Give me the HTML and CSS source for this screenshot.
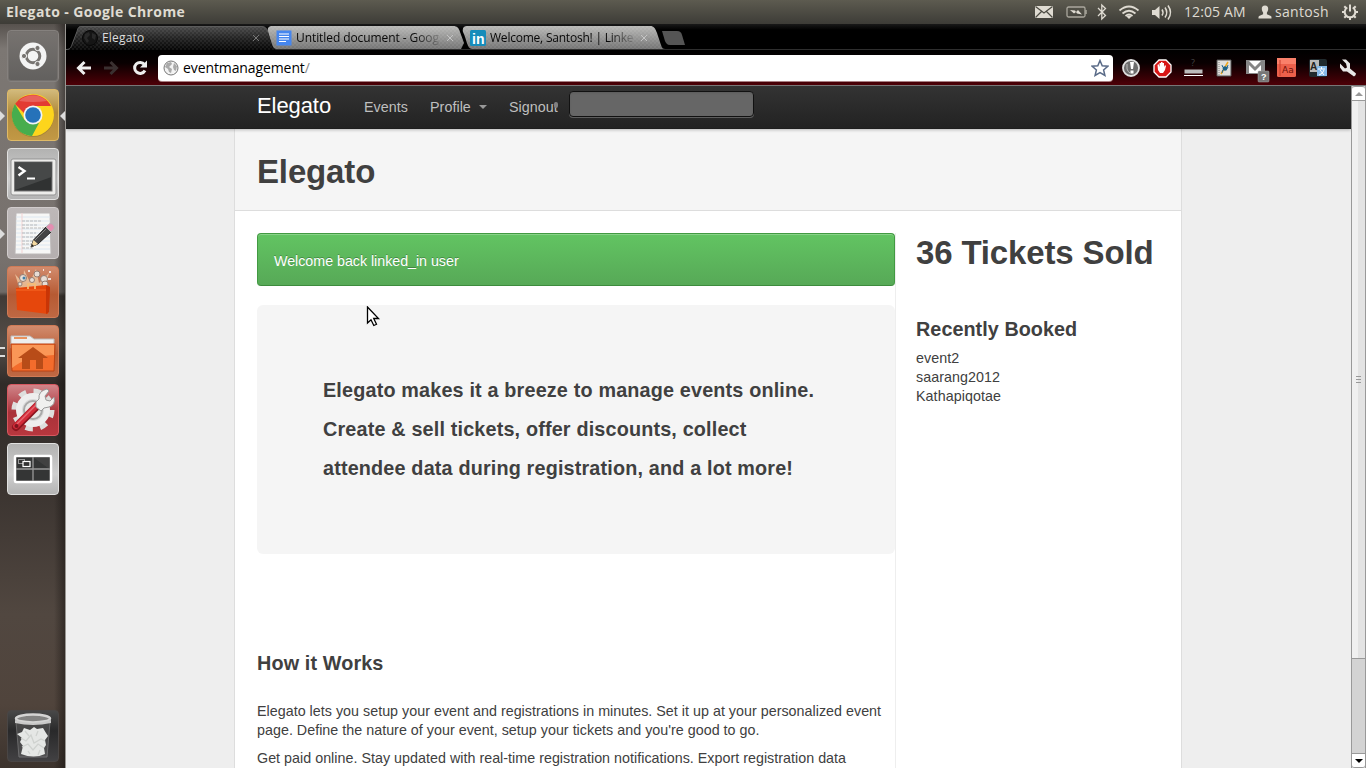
FILE: index.html
```html
<!DOCTYPE html>
<html lang="en">
<head>
<meta charset="utf-8">
<title>Elegato</title>
<link rel="stylesheet" href="styles.css">
</head>
<body>
<header class="panel">
  <span class="panel-title">Elegato - Google Chrome</span>
  <svg class="indicators" width="166" height="24" viewBox="1030 0 166 24" fill="none" stroke="#dfdbd2">
    <path d="M1035 6h18v12h-18z" fill="#dfdbd2" stroke="none"/><path d="M1035.500 6.500l8.500 6.500 8.500-6.500M1035.500 17.500l6-6M1052.500 17.500l-6-6" stroke="#4b4a42" stroke-width="1.200"/>
    <rect x="1067" y="7" width="18" height="10" rx="1.500" stroke="#aaa79d" stroke-width="1.300"/><path d="M1086 10v4" stroke="#aaa79d" stroke-width="1.500"/><path d="M1070 10l5 .5 1 1.500 2-2 4 4.500-5-1-1-1.500-2 1.500z" fill="#dfdbd2" stroke="none"/>
    <path d="M1098 8l7.500 7.500-3.700 3.500V5l3.700 3.500L1098 16" stroke-width="1.300"/>
    <path d="M1119.500 10.500q9.500-8 19 0M1122.500 13.500q6.500-5.500 13 0M1125.500 16q3.500-3 7 0" stroke-width="1.700"/><path d="M1126.500 16.500l2.500 2.500 2.500-2.500q-2.500-2-5 0z" fill="#dfdbd2" stroke="none"/>
    <path d="M1152 10h3l4.500-4v13l-4.500-4h-3z" fill="#dfdbd2" stroke="none"/><path d="M1162 9.500q2 3 0 6M1165 7.500q3.500 5 0 10M1168 5.500q5 7 0 14" stroke-width="1.500"/>
  </svg>
  <span class="clock">12:05 AM</span>
  <svg class="person" width="14" height="14" viewBox="0 0 14 14"><path d="M7 .5c2.300 0 3.300 1.500 3.200 3.500-.1 2-.9 2.800-1.300 3.500v1.800l4 1.700c.7.400.6 1.500.6 2.500H.5c0-1-.1-2.100.6-2.500l4-1.700V7.500C4.700 6.800 3.900 6 3.800 4 3.700 2 4.700.5 7 .5z" fill="#dfdbd2"/></svg>
  <span class="user">santosh</span>
  <svg class="gear" width="18" height="18" viewBox="0 0 18 18" fill="none" stroke="#dfdbd2"><path d="M6.300 4.500a5.300 5.300 0 1 0 5.400 0" stroke-width="2"/><path d="M9 1.500v7" stroke-width="2"/><path d="M1 9h3M14 9h3M3.300 14.700l2-2M14.700 14.700l-2-2M3.300 3.300l2 2M14.700 3.300l-2 2M9 14v3" stroke-width="2"/></svg>
</header>
<div class="desktop">
  <nav class="launcher">
    <div class="tile dash"><svg width="52" height="52" viewBox="0 0 52 52"><circle cx="26" cy="26" r="13.500" fill="#f4f4f4"/><circle cx="26" cy="26" r="6.800" fill="none" stroke="#777471" stroke-width="3"/><g fill="#777471" stroke="#f4f4f4"><circle cx="17" cy="26" r="2.600"/><circle cx="30.500" cy="18" r="2.600"/><circle cx="30.500" cy="34" r="2.600"/></g></svg></div>
    <div class="tile chrome running"><svg width="52" height="52" viewBox="0 0 52 52"><circle cx="26" cy="27" r="21" fill="#8b7033" opacity=".5"/><circle cx="26" cy="26" r="21" fill="#fdd51c"/><path d="M8 15A21 21 0 0 1 44 17H26l-9 7z" fill="#e33b32"/><path d="M8 15l9.500 16 8.500 4 6-1-7 13A21 21 0 0 1 8 15z" fill="#47ad4d"/><circle cx="26" cy="26" r="9.500" fill="#f1f5f8"/><circle cx="26" cy="26" r="7.800" fill="#2672b9"/><path d="M12 12a20 20 0 0 1 28 0q-14 2-28 0" fill="#fff" opacity=".2"/></svg></div>
    <div class="tile silver"><svg width="52" height="52" viewBox="0 0 52 52"><rect x="4" y="11" width="45" height="36" rx="2" fill="#ececea" stroke="#939393"/><rect x="7.500" y="14" width="37.500" height="29" fill="#303232" stroke="#777"/><path d="M8 14.500h36.500V29L8 42z" fill="#464848"/><path d="M11.500 19l6 4-6 4.500" fill="none" stroke="#fff" stroke-width="2.400"/><path d="M20 30.500h8" stroke="#fff" stroke-width="2"/></svg></div>
    <div class="tile paper running-left"><svg width="52" height="52" viewBox="0 0 52 52"><path d="M9 6h34l1 41H8z" fill="#f7f7f6" stroke="#bcb8b8"/><path d="M9 10h34M9 14h34M9 18h34M9 22h34M9 26h34M9 30h34M9 34h34M9 38h34M9 42h34" stroke="#dce7f1"/><path d="M15 6v40" stroke="#f3d3d3"/><path d="M15 14h20M15 18h15M15 21h23M15 26h14M15 30h18M15 34h13M15 37h16M15 41h12" stroke="#bbb" stroke-dasharray="3 1"/><path d="M24 40l2.500-7L40 19l5 5-14 13z" fill="#454545" stroke="#222"/><path d="M24 40l2.500-7 4.500 4z" fill="#f4d9a1"/><path d="M39 20l4-3.500q4 0 4.500 4.500L44 25z" fill="#e48eb1" stroke="#b8b1b5"/><path d="M28 33l11-11" stroke="#888"/><path d="M24 40l1-3 2 2z" fill="#222"/></svg></div>
    <div class="tile orange"><svg width="52" height="52" viewBox="0 0 52 52"><path d="M13 24L8 8l8 9 1-13 6 12 6-13 3 14 10-10-3 12z" fill="#ffe7bf" opacity=".6"/><g fill="#e7ddd5" stroke="#947d73"><circle cx="16" cy="12" r="3.500"/><circle cx="30" cy="8" r="3"/><circle cx="37" cy="13" r="3.500"/><circle cx="25" cy="14" r="2.500"/><circle cx="13" cy="18" r="2"/><circle cx="38" cy="18" r="3"/></g><circle cx="17" cy="12" r="1.500" fill="#407fa8"/><path d="M42 6h2M21 5h2M41 13h3M36 4h1" stroke="#fff" stroke-width="1.500"/><path d="M9 22l30-3 4 3-2 26-31-4z" fill="#e6470c"/><path d="M39 19l4 2-1 25-3 2z" fill="#c93506"/><path d="M9 24h30" stroke="#f76a26"/><path d="M21 23v-5h7v5" fill="none" stroke="#f8bd73" stroke-width="1.700"/></svg></div>
    <div class="tile orange home running-left"><svg width="52" height="52" viewBox="0 0 52 52"><path d="M4 21V11h19l4 3h20v9H4z" fill="#eee" stroke="#bbb"/><path d="M7 13h13" stroke="#e9925e" stroke-width="2"/><path d="M4 19h44l-1 27H5z" fill="#f36c2c" stroke="#ba4213"/><path d="M5 20h42v10Q20 31 5 43z" fill="#ffb475" opacity=".6"/><path d="M11 33l15-11 15 11h-5v11h-7v-9h-6v9h-8V33z" fill="#b84c18"/></svg></div>
    <div class="tile red"><svg width="52" height="52" viewBox="0 0 52 52"><circle cx="26" cy="26" r="18" fill="none" stroke="#dededd" stroke-width="7" stroke-dasharray="7.050 7.080"/><circle cx="26" cy="26" r="14" fill="#dadada" stroke="#eee" stroke-width="6"/><circle cx="26" cy="26" r="9" fill="#e9e9e8" stroke="#a9a9a9" stroke-width="2"/><path d="M9 43l22-22" stroke="#8c1620" stroke-width="8" stroke-linecap="round"/><path d="M9 42l22-22" stroke="#d32c3a" stroke-width="6" stroke-linecap="round"/><path d="M10 40l21-21" stroke="#e66870" stroke-width="1.500"/><circle cx="9.500" cy="42" r="2" fill="#7e151e"/><path d="M29 18l3-3q-1-8 8-10l2 2-4 5 1 4 4 1 4-4q2 8-5 10l-5 1-3 3-5-4z" fill="#f0f0ef" stroke="#999"/></svg></div>
    <div class="tile silver"><svg width="52" height="52" viewBox="0 0 52 52"><rect x="8" y="13" width="36" height="26" rx="1" fill="#343535" stroke="#fff" stroke-width="2.500"/><path d="M26 14v24M9 26h34" stroke="#999" stroke-width="1.300"/><path d="M26.500 14.500h16V26" fill="#555" opacity=".4"/><rect x="11.500" y="16.500" width="6" height="4" fill="#333" stroke="#999"/><rect x="16" y="18.500" width="7" height="5" fill="#333" stroke="#fff" stroke-width="1.200"/></svg></div>
    <div class="tile trash"><svg width="52" height="52" viewBox="0 0 52 52"><path d="M9 12h34l-3 35H12z" fill="#666" opacity=".45" stroke="#aaa"/><path d="M10 24l5-2 2-4 6 2 4-3 3 2 6-1 3 5 2 3-3 4 1 5-2 3 1 6q-11 5-24 0l2-8-3-4 2-4z" fill="#e5e7e5"/><path d="M14 28l5 3 5-6 3 8 7-4 4 2M15 37l6-3 5 6 5-6 6 4M18 21l4 5M31 21l-2 5M21 41l2 3M33 40l-2 5" stroke="#cfd2cf" stroke-width="1.300" fill="none"/><ellipse cx="26" cy="8.500" rx="17" ry="4" fill="#838382" stroke="#d4d4d3" stroke-width="2.500"/><path d="M8 10q18 6 36 0v3q-18 4-36 0z" fill="#c9c9c8"/></svg></div>
  </nav>
  <main class="browser">
    <div class="tabstrip">
      <svg class="tab-shapes" width="640" height="26" viewBox="66 24 640 26">
        <defs>
          <linearGradient id="dark" x1="0" y1="0" x2="0" y2="1"><stop offset="0" stop-color="#4b4b4b"/><stop offset=".5" stop-color="#232323"/><stop offset="1" stop-color="#050505"/></linearGradient>
          <linearGradient id="light" x1="0" y1="0" x2="0" y2="1"><stop offset="0" stop-color="#b9b9b7"/><stop offset="1" stop-color="#747474"/></linearGradient>
          <pattern id="weave" width="4" height="4" patternUnits="userSpaceOnUse"><path d="M0 0h2v2H0zM2 2h2v2H2z" fill="#fff" opacity=".06"/></pattern>
        </defs>
        <path d="M66 49.500h640" stroke="#2e2e2e"/>
        <path d="M276 49c-5 0-5-9-8-17-1-4 1-6 4-6h181c4 0 6 2 7 6l4 11-3 6z" fill="url(#light)"/><path d="M472 49c-5 0-5-9-9-17-1-4 1-6 4-6h183c4 0 5 2 7 7l4 12c1 3 2 4 4 4z" fill="url(#light)"/>
        <path d="M276 49c-5 0-5-9-8-17-1-4 1-6 4-6h181c4 0 6 2 7 6l4 11-3 6zM472 49c-5 0-5-9-9-17-1-4 1-6 4-6h183c4 0 5 2 7 7l4 12c1 3 2 4 4 4z" fill="url(#weave)"/>
        <path d="M66 50c4 0 5-2 6-5l5-14c1-4 2-5 5-5h179c4 0 6 2 7 6l4 12c1 4 3 6 5 6z" fill="url(#dark)"/>
        <path d="M66 50c4 0 5-2 6-5l5-14c1-4 2-5 5-5h179c4 0 6 2 7 6l4 12c1 4 3 6 5 6z" fill="url(#weave)"/>
        <path d="M66 49.500c4 0 5-2 6-5l5-13c1-4 2-5 5-5h179c4 0 6 2 7 6" fill="none" stroke="#5c5c5c"/>
        <path d="M662 31h15c3 0 4 1 5 4l3 10h-15c-3 0-4-2-5-4z" fill="#555"/>
      </svg>
      <div class="tab tab-active"><svg width="16" height="16" viewBox="0 0 16 16"><circle cx="8" cy="8" r="7.500" fill="#151515" stroke="#080808"/><path d="M3 4l4-2 1 3-3 3 2 3-2 2-3-5zM10 3l4 2-1 5-3-2z" fill="#292929"/></svg><span class="tab-label">Elegato</span><svg class="close" width="8" height="8"><path d="M1 1l6 6M7 1L1 7" stroke="#777"/></svg></div>
      <div class="tab tab-doc"><svg width="16" height="16" viewBox="0 0 16 16"><path d="M.5.500h15v15H.5z" fill="#4686ee"/><path d="M3 4h10M3 6.500h10M3 9h10M3 11.500h7" stroke="#fff" stroke-width="1.200"/></svg><span class="tab-label">Untitled document - Goog</span><svg class="close" width="8" height="8"><path d="M1 1l6 6M7 1L1 7" stroke="#c4c4c4"/></svg></div>
      <div class="tab tab-link"><svg width="16" height="16" viewBox="0 0 16 16"><rect width="16" height="16" rx="1.500" fill="#168cba"/><text class="linkedin" x="2" y="13.500">in</text></svg><span class="tab-label">Welcome, Santosh! | Linke</span><svg class="close" width="8" height="8"><path d="M1 1l6 6M7 1L1 7" stroke="#c4c4c4"/></svg></div>
    </div>
    <div class="toolbar">
      <svg class="nav-icons" width="92" height="36" viewBox="66 50 92 36" fill="none"><path d="M91 68H79M84.500 62l-6 6 6 6" stroke="#eee" stroke-width="3"/><path d="M104 68h12M110.500 62l6 6-6 6" stroke="#3a3030" stroke-width="3"/><path d="M144.500 64.500a5.500 5.500 0 1 0 .5 6" stroke="#eee" stroke-width="3"/><path d="M147 60.500v7h-7z" fill="#eee"/></svg>
      <div class="omnibox">
        <svg width="16" height="16" viewBox="0 0 16 16"><circle cx="8" cy="8" r="7" fill="#f3f3f3" stroke="#777"/><path d="M2 7l2-4 4-1 1 2-3 3 3 2-1 4-2-1-1-3zM11 3l3 3-1 5-2-1-1-3z" fill="#aaa"/></svg>
        <span class="url">eventmanagement<i>/</i></span>
        <svg class="star" width="18" height="18" viewBox="0 0 18 18"><path d="M9 1.500l2.200 5.200 5.600.5-4.200 3.700 1.300 5.500L9 13.500l-4.900 2.900 1.300-5.500L1.200 7.200l5.600-.5z" fill="#fff" stroke="#596a87" stroke-width="1.500"/></svg>
      </div>
      <svg class="extensions" width="253" height="36" viewBox="1113 50 253 36">
        <circle cx="1131" cy="68" r="8" fill="#6d6d6d" stroke="#e1e1e1" stroke-width="1.800"/><path d="M1130 62h4l-1 7h-2zM1130.500 70.500h3v3h-3z" fill="#fff"/><path d="M1127 64v5q1 3 3 4" fill="none" stroke="#bbb"/>
        <path d="M1159 60h7l5 5v7l-5 5h-7l-5-5v-7z" fill="#d71616" stroke="#fff" stroke-width="1.300"/><path d="M1157.500 65l1-1 1 3v-4h1.500v3-4h1.500v4-3h1.500v4l1-2 1 1-1 4-2 3h-3l-2-3z" fill="#fff"/>
        <text class="tiny-q" x="1191" y="66">?</text><path d="M1184.500 69.500h18v4h-18z" fill="#bbb"/><path d="M1184 75.500h19" stroke="#fff"/>
        <path d="M1217 60h14v16h-14z" fill="#e0e0dd" stroke="#555"/><path d="M1219 62v13" stroke="#888" stroke-dasharray="1 1"/><path d="M1228 62l-7 12" stroke="#efa71d" stroke-width="1.500"/><path d="M1222 65q0 3 3 3t3-3M1222 73q0-4 3-4t3-2" fill="none" stroke="#246b94"/><circle cx="1225" cy="68.500" r="2.300" fill="#1d6488"/>
        <path d="M1246 60h19v14h-19z" fill="#898989"/><path d="M1249 61h12v12h-12z" fill="#fff"/><path d="M1247 61l8 8 8-8" fill="none" stroke="#858585" stroke-width="3"/><rect x="1258" y="71" width="11" height="11" rx="1" fill="#777" stroke="#aaa" stroke-width=".5"/><text class="badge-q" x="1261" y="80">?</text>
        <rect x="1277" y="58" width="19" height="19" rx="1.500" fill="#ec604b"/><path d="M1277 58h19v6h-19z" fill="#fa806a"/><path d="M1280 60v16" stroke="#c83c2d"/><text class="dict" x="1282" y="73">Aa</text>
        <rect x="1309" y="59" width="18" height="18" rx="2" fill="#202a2e"/><path d="M1310 60h9v12h-9z" fill="#b9b9b9"/><text class="letter-a" x="1310" y="70">A</text><path d="M1317 66h10v10h-10z" fill="#86b9e9"/><path d="M1318 69h7M1321.500 67v2M1320 70l4 5M1324 70q-1 4-5 5" stroke="#fff" fill="none"/>
        <path d="M1342 60l4 4 1 4-2 1-5-5 0 4 3 4 4 0 7 5q2-1 2-3l-6-5 0-5-4-4z" fill="#e7e7e7" transform="translate(0 -.5)"/>
      </svg>
    </div>
    <div class="viewport">
      <div class="page">
        <div class="navbar">
          <span class="brand">Elegato</span><span class="nav-events">Events</span><span class="nav-profile">Profile</span><span class="caret"></span><span class="nav-signout">Signout<i class="bullet"></i></span><input class="search" aria-label="Search">
        </div>
        <div class="container">
          <div class="page-header"><h1>Elegato</h1></div>
          <div class="columns">
            <section class="content">
              <div class="alert">Welcome back linked_in user</div>
              <div class="hero">Elegato makes it a breeze to manage events online.<br>Create &amp; sell tickets, offer discounts, collect<br>attendee data during registration, and a lot more!</div>
              <h3 class="how">How it Works</h3>
              <p>Elegato lets you setup your event and registrations in minutes. Set it up at your personalized event<br>page. Define the nature of your event, setup your tickets and you're good to go.</p>
              <p>Get paid online. Stay updated with real-time registration notifications. Export registration data</p>
            </section>
            <aside class="side">
              <h1>36 Tickets Sold</h1>
              <h3>Recently Booked</h3>
              <ul><li>event2</li><li>saarang2012</li><li>Kathapiqotae</li></ul>
            </aside>
          </div>
        </div>
      </div>
      <div class="scrollbar"><div class="sb-up"></div><div class="sb-thumb"><i></i><i></i><i></i></div><div class="sb-track"></div><div class="sb-down"></div></div>
    </div>
  </main>
</div>
<svg class="cursor" width="16" height="22" viewBox="0 0 16 22"><path d="M2.500 1v16l3.500-3.200 2.800 5.700 2.700-1.200L8.700 12.500h4.800z" fill="#fff" stroke="#000" stroke-width="1.300"/></svg>
</body>
</html>
```
FILE: styles.css
```css
* { box-sizing: border-box; }
body { margin: 0; width: 1366px; height: 768px; overflow: hidden; font-family: "Liberation Sans", sans-serif; color: #404040; }
svg { display: block; flex: none; }
h1, h3, p, ul { margin: 0; padding: 0; }

.panel { height: 24px; display: flex; align-items: center; background: linear-gradient(#5d5b50, #3d3c37); color: #dfdbd2; font: 14px/24px "Open Sans", sans-serif; white-space: nowrap; }
.panel-title { width: 1024px; padding-left: 6px; font-size: 14px; font-weight: 700; letter-spacing: .400px; }
.indicators { margin-left: 6px; margin-right: -12px; }
.clock { width: 74px; letter-spacing: 0.100px; }
.person { margin-right: 3px; }
.user { width: 66px; letter-spacing: .300px; }

.desktop { display: flex; height: 744px; }
.launcher { width: 66px; padding: 6px 0 6px 7px; display: flex; flex-direction: column; gap: 7px; border-right: 1px solid #999692; background: linear-gradient(90deg, transparent 54px, rgba(20,16,14,.5) 65px), linear-gradient(#57524e 0, #7c7773 25px, #77716d 235px, #6f6a66 268px, #403a36 272px, #554e49 320px, #302b28 360px, #3c3531 470px, #514740 590px, #50443c 680px, #3c332d 744px); }
.tile { position: relative; width: 52px; height: 52px; border-radius: 4px; border: 1px solid rgba(255,255,255,.4); flex: none; }
.tile > svg { margin: -1px; }
.dash { background: linear-gradient(#777370, #62605e); border-color: #85817e; box-shadow: inset 0 0 0 1px #74706d; }
.chrome { background: linear-gradient(#d2ba7c, #b18b3a 45%, #c29845); border-color: #dfba67; }
.silver { background: linear-gradient(#b2b2b1, #cfcfcf 60%, #b4b4b4); border-color: #e1e1e0; }
.paper { background: linear-gradient(#bdb8b8, #b5afaf); border-color: #d1cccc; }
.orange { background: linear-gradient(#d28c6e, #b65a33 55%, #bf6843); border-color: #d07b56; }
.red { background: linear-gradient(#d18589, #a9323a 55%, #b8373e); border-color: #d65860; }
.trash { margin-top: auto; background: linear-gradient(#484848, #29292a 40%, #424143); border-color: #4a4645; }
.running::before, .running-left::before { content: ""; position: absolute; left: -8px; top: 21px; border: 5px solid transparent; border-left-color: #ddd; border-right: 0; }
.running::after { content: ""; position: absolute; right: -7px; top: 21px; border: 5px solid transparent; border-right-color: #ddd; border-left: 0; }
.running-left.home::before { width: 5px; height: 6px; border: solid #ddd; border-width: 2px 0; }

.browser { width: 1300px; display: flex; flex-direction: column; }
.tabstrip { position: relative; height: 26px; display: flex; background: linear-gradient(#191919, #000 6px); border-bottom: 1px solid #2e2e2e; }
.tab-shapes { position: absolute; left: 0; top: 0; }
.tab { position: relative; display: flex; align-items: center; height: 27px; font: 12px/20px "Open Sans", sans-serif; color: #080808; }
.tab-active { width: 210px; padding-left: 16px; color: #ddd; }
.tab-doc { width: 194px; }
.tab-link { width: 190px; }
.tab-label { margin-left: 4px; width: 150px; overflow: hidden; white-space: nowrap; letter-spacing: -0.080px; }
.tab-active .tab-label { width: 150px; letter-spacing: .200px; }
.tab-doc .tab-label, .tab-link .tab-label { mask-image: linear-gradient(90deg, #000 118px, transparent 148px); }
.tab-link .tab-label { letter-spacing: -0.220px; }
.linkedin { font: bold 14px "Liberation Sans"; fill: #fff; }
.toolbar { height: 35px; display: flex; align-items: flex-start; background: linear-gradient(#000, #090001 13px, #4e0007); }
.omnibox { width: 955px; height: 26px; margin-top: 5px; padding: 0 4px 0 5px; display: flex; align-items: center; background: #fff; border-radius: 4px; box-shadow: 0 1px #a98083; }
.url { flex: 1; margin-left: 4px; font: 14px/24px "Open Sans", sans-serif; color: #000; letter-spacing: -0.100px; }
.url i { color: #888; font-style: normal; }
.tiny-q { font: 9px "Open Sans"; fill: #444; }
.badge-q { font: bold 9px "Liberation Sans"; fill: #fff; }
.dict { font: 9px "DejaVu Sans"; fill: #701109; }
.letter-a { font: bold 10px "Liberation Sans"; fill: #222; }

.viewport { display: flex; height: 683px; border-top: 1px solid #777; }
.page { width: 1285px; height: 683px; background: #eee; overflow: hidden; }
.navbar { position: relative; height: 43px; display: flex; align-items: flex-start; padding-left: 191px; background: linear-gradient(#333, #222); box-shadow: 0 1px 3px rgba(0,0,0,.25), inset 0 -1px rgba(0,0,0,.1); color: #bfbfbf; font-size: 14.300px; line-height: 20px; white-space: nowrap; }
.brand { width: 107px; color: #fff; font-size: 22px; line-height: 22px; padding-top: 9px; letter-spacing: -0.080px; }
.nav-events, .nav-profile, .nav-signout { padding-top: 11px; letter-spacing: .050px; }
.nav-events { width: 66px; }
.nav-profile { width: 50px; }
.nav-signout { position: relative; width: 61px; }
.bullet { position: absolute; left: 45px; top: 16px; width: 4px; height: 6px; border-radius: 2px; background: #808080; }
.caret { width: 8px; height: 4px; margin: 19px 21px 0 -1px; border: 4px solid transparent; border-top-color: #999; border-bottom: 0; margin-right: 22px; }
.search { width: 185px; height: 26px; margin: 5px 0 0 -1px; background: #666; border: 1px solid #111; border-radius: 4px; box-shadow: inset 0 1px 2px rgba(0,0,0,.1), 0 1px rgba(255,255,255,.25); }
.container { width: 948px; height: 640px; margin-left: 168px; background: #fff; border: solid #ddd; border-width: 0 1px; }
.page-header { height: 82px; padding: 23px 22px 0; background: #f5f5f5; border-bottom: 1px solid #ddd; }
h1 { font-size: 33px; line-height: 40px; letter-spacing: -0.150px; }
.columns { display: flex; padding: 22px 0 0 22px; }
.content { width: 639px; height: 560px; border-right: 1px solid #eee; white-space: nowrap; }
.alert { height: 53px; padding: 18px 16px; color: #fff; background: linear-gradient(#62c462, #57a957); border: 1px solid #429a42; border-bottom-color: #3d8b3d; border-radius: 4px; box-shadow: inset 0 1px rgba(255,255,255,.25); font-size: 14.300px; line-height: 19px; letter-spacing: -0.040px; text-shadow: 0 -1px rgba(0,0,0,.25); }
.hero { height: 249px; margin-top: 19px; padding: 66px; background: #f5f5f5; border-radius: 6px; font-size: 19.800px; font-weight: 700; line-height: 39px; letter-spacing: .170px; }
h3 { font-size: 19.800px; line-height: 39px; letter-spacing: .050px; }
.how { margin: 90px 0 19px; letter-spacing: .130px; }
p { font-size: 14.300px; line-height: 19px; margin-bottom: 9px; letter-spacing: .018px; }
.side { padding-left: 20px; white-space: nowrap; }
.side h3 { margin-top: 37px; }
ul { list-style: none; font-size: 14.300px; line-height: 19px; letter-spacing: .060px; }
.scrollbar { width: 15px; height: 682px; display: flex; flex-direction: column; border: solid #999; border-width: 0 1px; background: #d3d3d3; }
.sb-up { height: 15px; display: grid; place-items: center; background: #fff; border: solid #999; border-width: 1px 0; border-radius: 3px 3px 0 0; }
.sb-up::before { content: ""; border: 4px solid transparent; border-bottom-color: #999; border-top: 0; }
.sb-thumb { height: 558px; display: flex; flex-direction: column; align-items: center; justify-content: center; gap: 2px; background: linear-gradient(90deg, #f0f0f0 50%, #e3e3e3 50%); border-bottom: 1px solid #999; }
.sb-thumb i { width: 5px; height: 1px; background: #999; }
.sb-track { flex: 1; }
.sb-down { height: 15px; display: grid; place-items: center; background: #fff; border: solid #999; border-width: 1px 0; border-radius: 0 0 3px 3px; }
.sb-down::before { content: ""; border: 4px solid transparent; border-top-color: #000; border-bottom: 0; }
.cursor { position: absolute; left: 365px; top: 306px; }
```
